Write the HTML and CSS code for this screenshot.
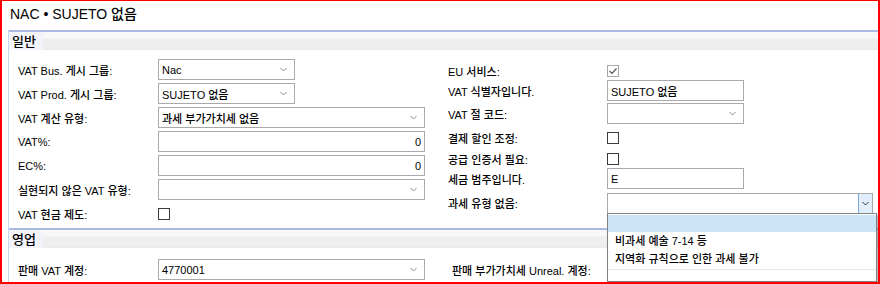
FILE: index.html
```html
<!DOCTYPE html>
<html lang="ko">
<head>
    <meta charset="UTF-8">
    <title>NAC • SUJETO 없음</title>
    <link rel="stylesheet" href="styles.css">
</head>
<body>

<div class="frame">
    <div class="title">NAC • SUJETO 없음</div>

    <!-- 일반 -->
    <div class="section">
        <div class="section-head"><span class="section-name">일반</span></div>
        <div class="section-body general-body">
            <div class="col col-left">
                <div class="field-row">
                    <span class="label">VAT Bus. 게시 그룹:</span>
                    <div class="box select short"><span class="value">Nac</span><svg class="chevron" width="7" height="5" viewBox="0 0 7 5"><polyline points="0.5,1 3.5,4 6.5,1"/></svg></div>
                </div>
                <div class="field-row">
                    <span class="label">VAT Prod. 게시 그룹:</span>
                    <div class="box select short"><span class="value">SUJETO 없음</span><svg class="chevron" width="7" height="5" viewBox="0 0 7 5"><polyline points="0.5,1 3.5,4 6.5,1"/></svg></div>
                </div>
                <div class="field-row">
                    <span class="label">VAT 계산 유형:</span>
                    <div class="box select wide"><span class="value">과세 부가가치세 없음</span><svg class="chevron" width="7" height="5" viewBox="0 0 7 5"><polyline points="0.5,1 3.5,4 6.5,1"/></svg></div>
                </div>
                <div class="field-row">
                    <span class="label">VAT%:</span>
                    <div class="box wide number"><span class="value">0</span></div>
                </div>
                <div class="field-row">
                    <span class="label">EC%:</span>
                    <div class="box wide number"><span class="value">0</span></div>
                </div>
                <div class="field-row">
                    <span class="label">실현되지 않은 VAT 유형:</span>
                    <div class="box select wide"><span class="value"></span><svg class="chevron" width="7" height="5" viewBox="0 0 7 5"><polyline points="0.5,1 3.5,4 6.5,1"/></svg></div>
                </div>
                <div class="field-row">
                    <span class="label">VAT 현금 제도:</span>
                    <span class="checkbox"></span>
                </div>
            </div>

            <div class="col col-right">
                <div class="field-row row-s">
                    <span class="label">EU 서비스:</span>
                    <span class="checkbox checked"><svg width="10" height="10" viewBox="0 0 10 10"><polyline points="1.5,5 4,7.5 8.5,2.5"/></svg></span>
                </div>
                <div class="field-row row-m">
                    <span class="label">VAT 식별자입니다.</span>
                    <div class="box short"><span class="value">SUJETO 없음</span></div>
                </div>
                <div class="field-row row-m">
                    <span class="label">VAT 절 코드:</span>
                    <div class="box select short"><span class="value"></span><svg class="chevron" width="7" height="5" viewBox="0 0 7 5"><polyline points="0.5,1 3.5,4 6.5,1"/></svg></div>
                </div>
                <div class="field-row row-l">
                    <span class="label">결제 할인 조정:</span>
                    <span class="checkbox"></span>
                </div>
                <div class="field-row row-s">
                    <span class="label">공급 인증서 필요:</span>
                    <span class="checkbox"></span>
                </div>
                <div class="field-row row-m">
                    <span class="label">세금 범주입니다.</span>
                    <div class="box short"><span class="value">E</span></div>
                </div>
                <div class="field-row row-xl">
                    <span class="label">과세 유형 없음:</span>
                    <div class="box select open"><span class="value"></span><span class="drop-btn"><svg class="chevron dark" width="7" height="5" viewBox="0 0 7 5"><polyline points="0.5,1 3.5,4 6.5,1"/></svg></span></div>
                </div>
            </div>
        </div>
    </div>

    <!-- 영업 -->
    <div class="section">
        <div class="section-head"><span class="section-name">영업</span></div>
        <div class="section-body sales-body">
            <div class="col col-left">
                <div class="field-row">
                    <span class="label">판매 VAT 계정:</span>
                    <div class="box select wide"><span class="value">4770001</span><svg class="chevron" width="7" height="5" viewBox="0 0 7 5"><polyline points="0.5,1 3.5,4 6.5,1"/></svg></div>
                </div>
            </div>
            <div class="col col-right sales-right">
                <div class="field-row">
                    <span class="label">판매 부가가치세 Unreal. 계정:</span>
                    <div class="box select short"><span class="value"></span></div>
                </div>
            </div>
        </div>
    </div>

    <!-- open list of 과세 유형 없음 -->
    <div class="dropdown-list">
        <div class="list-item selected"></div>
        <div class="list-item">비과세 예술 7-14 등</div>
        <div class="list-item">지역화 규칙으로 인한 과세 불가</div>
        <div class="list-end"></div>
    </div>
</div>

</body>
</html>
```

FILE: styles.css
```css
body {
    margin: 0;
    padding: 0;
    background-color: #fff;
    font-family: "Liberation Sans", "Noto Sans CJK KR", sans-serif;
    color: #000;
}
.frame {
    position: relative;
    width: 880px;
    height: 284px;
    box-sizing: border-box;
    border-style: solid;
    border-color: #ff0000;
    border-width: 1px 2px 2px 2px;
    overflow: hidden;
    background-color: #fff;
}
.title {
    height: 29px;
    box-sizing: border-box;
    padding: 3px 0 0 8px;
    font-size: 14px;
    line-height: 20px;
    font-weight: 500;
}
.section {
    margin-left: 6px;
    border-left: 1px solid #c9d6ef;
}
.section-head {
    height: 18px;
    border-top: 2px solid #aab9e2;
    background: linear-gradient(to bottom, #f8f8fb 0, #f8f8fb 6px, #eeeeee 7px, #eeeeee 17px, #e4e4e4 18px);
}
.section-name {
    display: inline-block;
    height: 17px;
    padding: 0 7px 0 3px;
    background-color: #f3f3fb;
    font-size: 13px;
    line-height: 17px;
    font-weight: 500;
}
.section-body {
    display: flex;
}
.general-body {
    height: 178px;
    box-sizing: border-box;
    padding-top: 9px;
}
.sales-body {
    padding-top: 11px;
    height: 32px;
}
.col {
    display: flex;
    flex-direction: column;
}
.col-left {
    width: 430px;
    padding-left: 9px;
    gap: 3px;
}
.col-right {
    flex: 1;
    padding-top: 3px;
}
.sales-right {
    padding-top: 0;
    padding-left: 4px;
}
.field-row {
    display: flex;
    align-items: center;
    height: 21px;
    font-size: 11px;
    font-weight: 500;
}
.row-s {
    height: 17px;
}
.row-m {
    height: 23px;
}
.row-l {
    height: 25px;
}
.row-xl {
    height: 26px;
}
.label {
    width: 140px;
    flex-shrink: 0;
    white-space: nowrap;
}
.col-right .label {
    width: 159px;
}
.sales-right .label {
    width: 155px;
}
.box {
    display: flex;
    align-items: center;
    height: 21px;
    box-sizing: border-box;
    border: 1px solid #a9a9a9;
    background-color: #fff;
    padding: 0 2px 0 3px;
    font-size: 11px;
}
.box.short {
    width: 137px;
}
.box.wide {
    width: 267px;
}
.box.open {
    width: 266px;
    padding-right: 0;
}
.box .value {
    flex: 1;
    white-space: nowrap;
}
.box.number .value {
    text-align: right;
    padding-right: 1px;
}
.chevron {
    margin-right: 5px;
    flex-shrink: 0;
}
.chevron polyline {
    fill: none;
    stroke: #8c8c8c;
    stroke-width: 1;
}
.chevron.dark polyline {
    stroke: #333;
}
.drop-btn {
    display: flex;
    align-items: center;
    justify-content: center;
    width: 14px;
    height: 19px;
    box-sizing: border-box;
    border-left: 1px solid #7fa7cf;
    background-color: #e1eefb;
}
.drop-btn .chevron {
    margin: 0;
}
.checkbox {
    display: inline-flex;
    align-items: center;
    justify-content: center;
    width: 12px;
    height: 12px;
    box-sizing: border-box;
    border: 1px solid #3a3a3a;
    background-color: #fff;
}
.checkbox.checked {
    border-color: #a8a8a8;
}
.checkbox svg polyline {
    fill: none;
    stroke: #555;
    stroke-width: 1.2;
}
.dropdown-list {
    position: absolute;
    left: 605px;
    top: 212px;
    width: 270px;
    height: 69px;
    box-sizing: border-box;
    border: 1px solid #828282;
    background-color: #fff;
    box-shadow: 2px 2px 2px rgba(0, 0, 0, 0.3);
    padding-top: 1px;
    font-size: 11px;
    font-weight: 500;
    z-index: 10;
}
.list-item {
    height: 18px;
    line-height: 18px;
    padding-left: 7px;
    white-space: nowrap;
}
.list-item.selected {
    height: 17px;
    background-color: #cce4f7;
}
.list-end {
    margin-top: 1px;
    border-top: 1px solid #e6e6e6;
}
```
